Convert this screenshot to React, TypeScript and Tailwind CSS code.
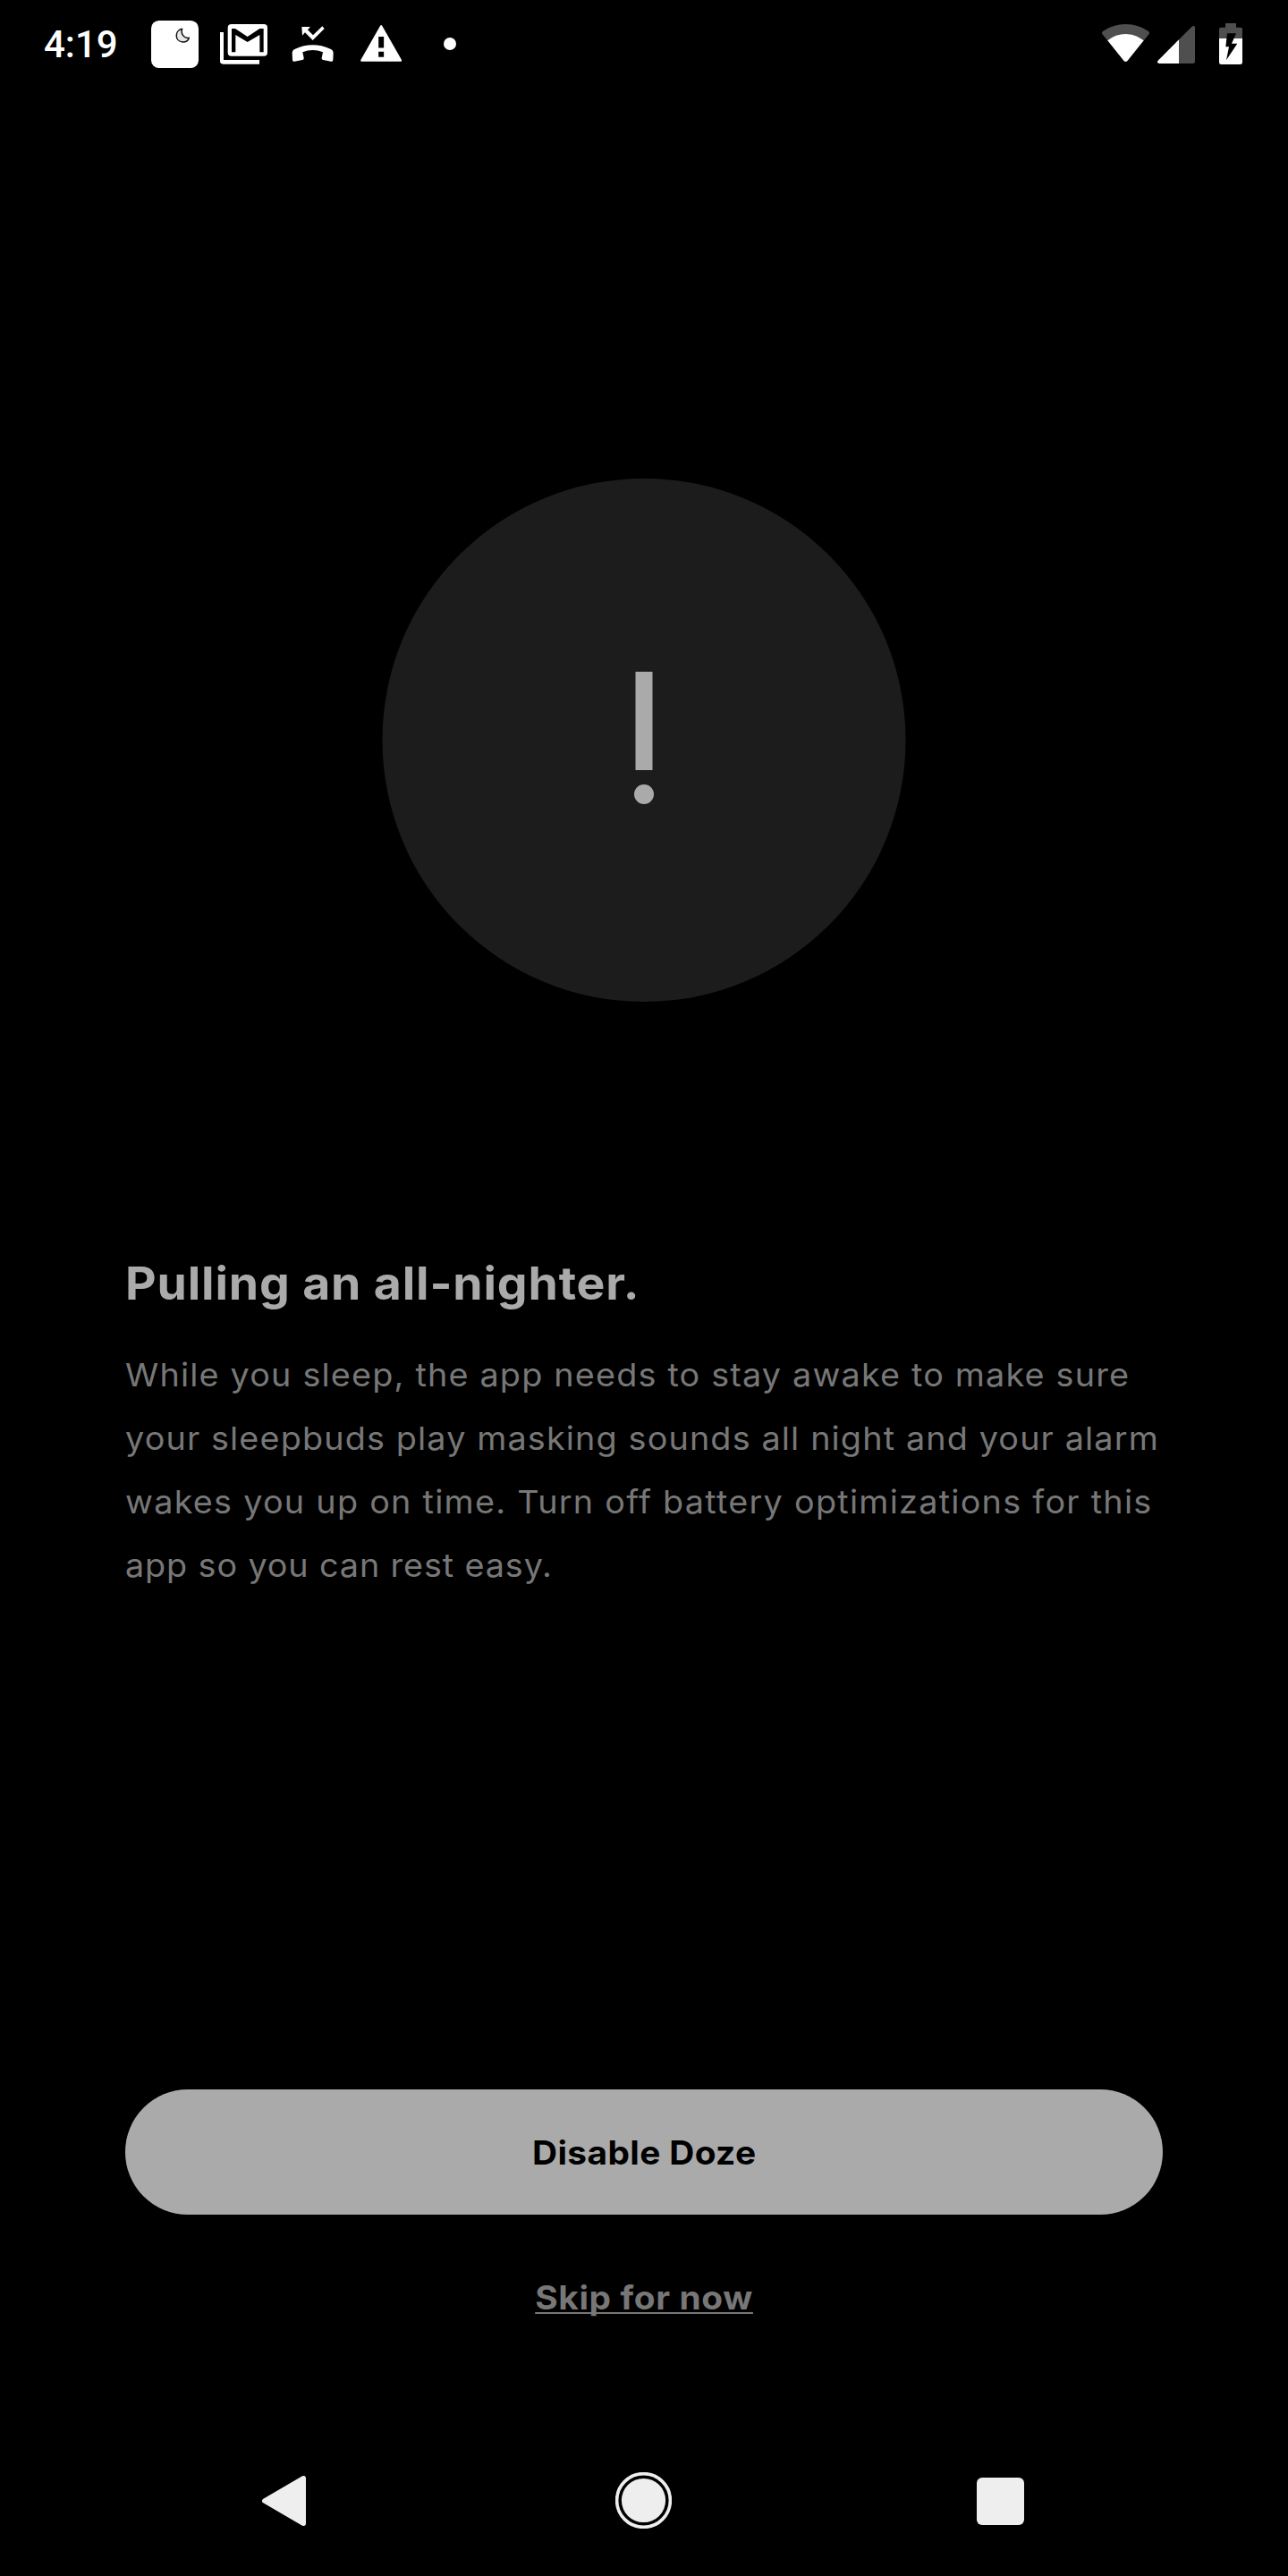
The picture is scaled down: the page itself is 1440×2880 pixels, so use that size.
import type { ReactNode } from "react";

function Icon({ box, className, children }: { box: string; className: string; children: ReactNode }) {
  return (
    <svg viewBox={box} className={`block shrink-0 ${className}`} fill="white" preserveAspectRatio="none">
      {children}
    </svg>
  );
}

function StatusBar() {
  return (
    <header className="flex h-[98px] items-start justify-between pl-[49px] pr-[51px] text-white">
      <div className="flex items-start">
        <span className="mt-[20px] w-[120px] font-['Roboto',sans-serif] text-[42px] font-medium leading-[60px]">
          4:19
        </span>
        <Icon box="417 39 159 159" className="mt-[23px] h-[53px] w-[53px]">
          <rect x="417" y="39" width="159" height="159" rx="26" />
          <path
            d="M521 67C495 71 495 109 523 111C534 111 542 105 544 97C527 99 515 83 521 67Z"
            fill="#e8e8e8"
            stroke="#111"
            strokeWidth="4.500"
            strokeLinejoin="round"
          />
        </Icon>
        <Icon box="648 51 159 135" className="ml-[24px] mt-[27px] h-[45px] w-[53px]">
          <path d="M648 78H660V171H780V185H658Q648 185 648 175Z" />
          <rect x="674" y="51" width="133" height="107" rx="12" />
          <path d="M687 66H699L740 93L781 66H794V145H781V87L740 111L700 87V145H687Z" fill="black" />
        </Icon>
        <Icon box="77 57 141 120" className="ml-[27px] mt-[29px] h-[40px] w-[47px]">
          <path d="M111 60H140L131 70L149 88L180 58L187 66L148 105L122 79L113 89Z" />
          <path d="M79 148Q79 138 89 134Q148 108 207 134Q217 138 217 148L216 171Q216 178 209 176L183 171Q177 170 178 164L182 145Q148 131 114 145L118 164Q119 170 113 171L87 176Q80 178 80 171Z" />
        </Icon>
        <Icon box="308 53 139 125" className="ml-[30px] mt-[28px] h-[41px] w-[46px]">
          <path
            d="M378 57L444 174H312Z"
            stroke="white"
            strokeWidth="7"
            strokeLinejoin="round"
          />
          <path d="M369 93H387V131H369ZM369 144H387V162H369Z" fill="black" />
        </Icon>
        <span className="ml-[47px] mt-[42px] h-[14px] w-[14px] rounded-full bg-white" />
      </div>
      <div className="flex items-start">
        <Icon box="66 51 159 126" className="mt-[27px] h-[42px] w-[53px]">
          <path d="M70 74Q104 51 145.500 51Q187 51 221 74Q227 79 224 84L152 173Q145.500 180 139 173L67 84Q64 79 70 74Z" fill="#4f4f4f" />
          <path d="M85 106Q112 84 145.500 84Q179 84 206 106L152 173Q145.500 180 139 173Z" />
        </Icon>
        <Icon box="252 57 126 126" className="ml-[9px] mt-[29px] h-[42px] w-[42px]">
          <path d="M324 103L367 60Q378 52 378 64V176Q378 183 371 183H324Z" fill="#4f4f4f" />
          <path d="M324 103V183H259Q248 182 254 173Z" />
        </Icon>
        <Icon box="459 48 78 138" className="ml-[27px] mt-[26px] h-[46px] w-[26px]">
          <path d="M459 99V68Q459 62 465 62H480V48H516V62H531Q537 62 537 68V99Z" fill="#4f4f4f" />
          <path d="M459 99H537V179Q537 186 530 186H466Q459 186 459 179Z" />
          <path d="M486 82H516L501 116H520L483 172L492 127H481Z" fill="black" />
        </Icon>
      </div>
    </header>
  );
}

function NavigationBar() {
  return (
    <nav className="flex h-[168px] items-center px-[293px] pb-[1px]">
      <Icon box="69 84 147 168" className="h-[56px] w-[49px]">
        <path
          d="M208 92V244L77 168Z"
          fill="#eee"
          stroke="#eee"
          strokeWidth="16"
          strokeLinejoin="round"
        />
      </Icon>
      <Icon box="0 0 63 63" className="ml-[346px] h-[63px] w-[63px]">
        <circle cx="31.500" cy="31.500" r="29.900" fill="none" stroke="#eee" strokeWidth="3.600" />
        <circle cx="31.500" cy="31.500" r="24.600" fill="#eee" />
      </Icon>
      <span className="ml-[341px] mt-[1px] h-[53px] w-[53px] shrink-0 rounded-[6px] bg-[#eee]" />
    </nav>
  );
}

export default function App() {
  return (
    <div className="flex h-[2880px] w-[1440px] flex-col overflow-hidden bg-black font-['Inter',sans-serif]">
      <StatusBar />
      <main className="flex flex-1 flex-col px-[140px]">
        <div className="mt-[437px] flex h-[585px] w-[585px] -translate-x-[0.5px] flex-col items-center self-center rounded-full bg-[#1c1c1c] pt-[216px]">
          <span className="h-[110px] w-[19px] bg-[#aaa]" />
          <span className="mt-[16px] h-[22px] w-[22px] translate-x-[0.5px] rounded-full bg-[#aaa]" />
        </div>

        <h1 className="mt-[279px] origin-left scale-x-105 whitespace-nowrap text-[51px] font-bold leading-[72px] tracking-[0.8px] text-[#aaa]">
          Pulling an all-nighter.
        </h1>
        <p className="mt-[31px] origin-left scale-x-105 whitespace-nowrap text-[36px] leading-[71px] text-[#777]">
          <span className="block tracking-[1.11px]">While you sleep, the app needs to stay awake to make sure</span>
          <span className="block tracking-[1.07px]">your sleepbuds play masking sounds all night and your alarm</span>
          <span className="block tracking-[1.19px]">wakes you up on time. Turn off battery optimizations for this</span>
          <span className="block tracking-[0.82px]">app so you can rest easy.</span>
        </p>

        <button className="mt-[550px] h-[140px] w-full shrink-0 rounded-full bg-[#aaa] pt-[1px] text-[37px] font-bold text-black">
          <span className="inline-block scale-x-105 tracking-[0.35px]">Disable Doze</span>
        </button>
        <button className="mt-[63px] scale-x-105 self-center text-[37px] font-bold leading-[60px] tracking-[0.6px] text-[#777] underline decoration-[2px] underline-offset-[3px] [text-decoration-skip-ink:none]">
          Skip for now
        </button>
      </main>
      <NavigationBar />
    </div>
  );
}
